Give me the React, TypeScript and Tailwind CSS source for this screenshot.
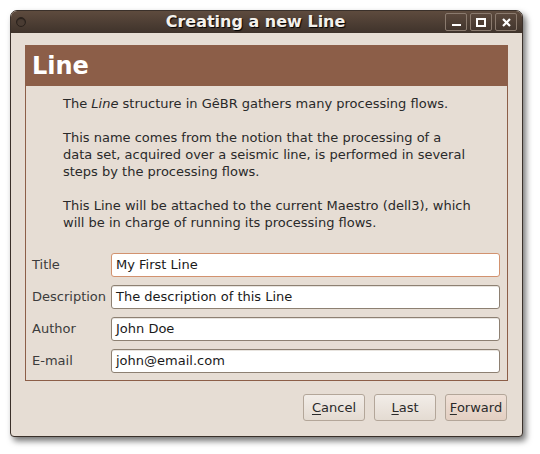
import React from 'react'

const font = { fontFamily: '"DejaVu Sans", "Noto Sans", sans-serif' }

function Field({ label, value, focused }: { label: string; value: string; focused?: boolean }) {
    return (
        <div className="flex items-center h-[24px]">
            <div className="w-[85px] text-[13px] text-[#3c3c3c] pl-[6px]">{label}</div>
            <div
                className={
                    focused
                        ? 'flex-1 h-[24px] rounded-[3px] border border-[#d2926f] bg-white flex items-center px-[4px] text-[13px] text-[#1a1a1a]'
                        : 'flex-1 h-[24px] rounded-[3px] border border-[#8d8072] bg-white flex items-center px-[4px] text-[13px] text-[#1a1a1a] shadow-[inset_0_1px_0_#e8e4df]'
                }
            >
                {value}
            </div>
        </div>
    )
}

function Btn({ first, rest, active }: { first: string; rest: string; active?: boolean }) {
    return (
        <button
            className={
                active
                    ? 'w-[62px] h-[27px] rounded-[3px] border border-[#b3a699] bg-gradient-to-b from-[#efe0d6] to-[#e3cfc2] text-[13px] text-[#2a2a2a]'
                    : 'w-[62px] h-[27px] rounded-[3px] border border-[#b3a699] bg-gradient-to-b from-[#f2ede8] to-[#e4dbd2] text-[13px] text-[#2a2a2a]'
            }
        >
            <span className="underline underline-offset-2">{first}</span>
            {rest}
        </button>
    )
}

export default function App() {
    return (
        <div className="w-[540px] h-[454px] bg-white pt-[10px] pl-[10px]" style={font}>
            <div className="w-[513px] h-[427px] rounded-t-[7px] rounded-b-[4px] border border-[#3a302a] bg-[#e6ddd4] shadow-[3px_4px_6px_rgba(0,0,0,0.55)] flex flex-col overflow-hidden">
                {/* titlebar */}
                <div className="h-[22px] bg-gradient-to-b from-[#5e4b3e] to-[#3f332b] flex items-center px-[5px] relative shrink-0">
                    <div className="w-[10px] h-[10px] rounded-full border border-[#2a221d] bg-[#4a3c33] shadow-[inset_0_1px_1px_rgba(0,0,0,0.5)]" />
                    <div className="absolute left-0 right-[22px] top-0 text-center text-[16px] leading-[21px] font-bold text-[#f4f1ec] [text-shadow:1px_1px_1px_#000]">
                        Creating a new Line
                    </div>
                    <div className="ml-auto flex gap-[3px] relative">
                        <div className="w-[22px] h-[18px] rounded-[2px] border border-[#8a7a6e] bg-gradient-to-b from-[#5a483c] to-[#43362e] flex items-end justify-center pb-[4px]">
                            <div className="w-[9px] h-[2px] bg-white" />
                        </div>
                        <div className="w-[22px] h-[18px] rounded-[2px] border border-[#8a7a6e] bg-gradient-to-b from-[#5a483c] to-[#43362e] flex items-center justify-center">
                            <div className="w-[10px] h-[9px] border-2 border-white" />
                        </div>
                        <div className="w-[22px] h-[18px] rounded-[2px] border border-[#8a7a6e] bg-gradient-to-b from-[#5a483c] to-[#43362e] flex items-center justify-center">
                            <svg width="9" height="9" viewBox="0 0 9 9">
                                <path d="M1 1L8 8M8 1L1 8" stroke="white" strokeWidth="2.2" />
                            </svg>
                        </div>
                    </div>
                </div>

                {/* body */}
                <div className="flex-1 px-[14px] pt-[12px] flex flex-col">
                    <div className="border border-[#8c5e48] flex flex-col">
                        <div className="h-[40px] bg-[#8c5e48] flex items-center pl-[6px] text-[24px] font-bold text-white">
                            Line
                        </div>
                        <div className="pl-[37px] pr-[20px] pt-[9px] text-[13px] leading-[17px] text-[#2a2a2a] flex flex-col gap-[17px]">
                            <p>
                                The <i>Line</i> structure in GêBR gathers many processing flows.
                            </p>
                            <p>
                                This name comes from the notion that the processing of a<br />
                                data set, acquired over a seismic line, is performed in several<br />
                                steps by the processing flows.
                            </p>
                            <p>
                                This Line will be attached to the current Maestro (dell3), which<br />
                                will be in charge of running its processing flows.
                            </p>
                        </div>
                        <div className="flex flex-col gap-[8px] pt-[22px] pb-[7px] pr-[7px]">
                            <Field label="Title" value="My First Line" focused />
                            <Field label="Description" value="The description of this Line" />
                            <Field label="Author" value="John Doe" />
                            <Field label="E-mail" value="john@email.com" />
                        </div>
                    </div>
                    <div className="flex justify-end gap-[9px] pt-[13px] pr-[1px]">
                        <Btn first="C" rest="ancel" />
                        <Btn first="L" rest="ast" />
                        <Btn first="F" rest="orward" active />
                    </div>
                </div>
            </div>
        </div>
    )
}
